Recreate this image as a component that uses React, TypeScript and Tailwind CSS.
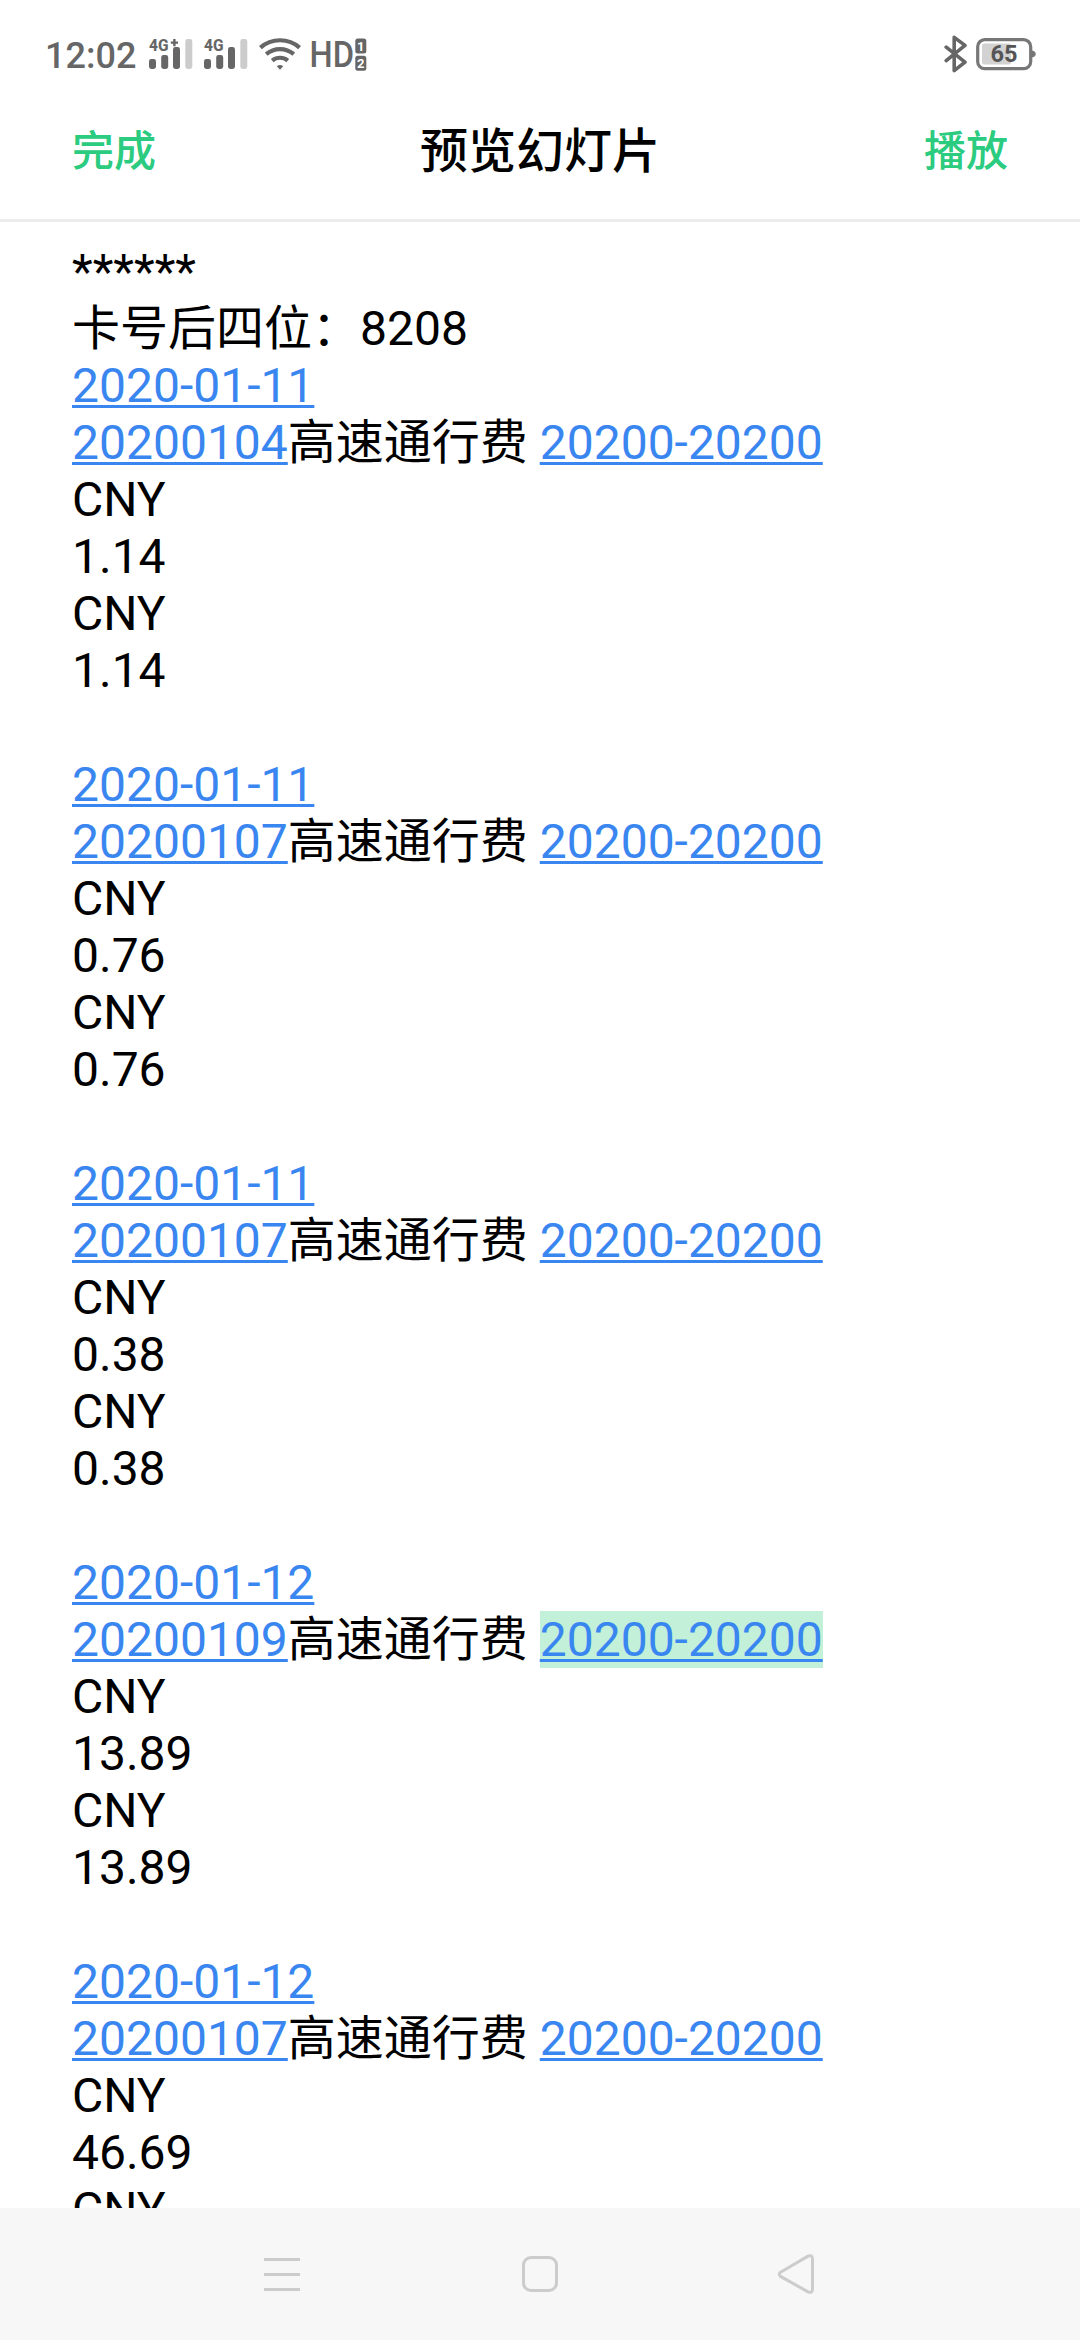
import type { ReactNode } from 'react';

interface Entry {
  date: string;
  code: string;
  amount: string;
  selected?: boolean;
}

const entries: Entry[] = [
  { date: '2020-01-11', code: '20200104', amount: '1.14' },
  { date: '2020-01-11', code: '20200107', amount: '0.76' },
  { date: '2020-01-11', code: '20200107', amount: '0.38' },
  { date: '2020-01-12', code: '20200109', amount: '13.89', selected: true },
  { date: '2020-01-12', code: '20200107', amount: '46.69' },
];

function SignalIcon({ plus }: { plus?: boolean }) {
  return (
    <svg className="w-[44px] h-[34px] overflow-visible" viewBox="0 0 44 34" fill="#666666">
      <text
        x="0"
        y="13"
        fontSize="16.5"
        fontWeight="800"
        textLength="19.5"
        lengthAdjust="spacingAndGlyphs"
      >
        4G
      </text>
      {plus && <path d="M24.200 1h2.400v2.400h2.400v2.400h-2.400v2.400h-2.400V5.800h-2.400V3.400h2.400z" />}
      <rect x="0" y="21" width="7" height="10" rx="2.4" />
      <rect x="12.2" y="17" width="7" height="14" rx="2.4" />
      <rect x="24" y="9" width="7" height="22" rx="2.4" />
      <rect x="36.3" y="1" width="7" height="30" rx="2.4" fill="#cccccc" />
    </svg>
  );
}

function WifiIcon() {
  return (
    <svg className="w-[42px] h-[34px]" viewBox="0 0 42 34" fill="none" stroke="#666666" strokeWidth="4.2">
      <path d="M1.4 9.6C12.5-.2 29.5-.2 40.6 9.6" />
      <path d="M7.2 16.2c8-6.8 19.6-6.8 27.6 0" />
      <path d="M13.2 22.6c4.6-3.8 11-3.8 15.6 0" />
      <path d="M17.8 28.2c2-1.5 4.4-1.5 6.4 0L21 31.8z" fill="#666666" stroke="none" />
    </svg>
  );
}

function HdIcon() {
  return (
    <svg className="w-[56px] h-[34px] overflow-visible" viewBox="0 0 56 34" fill="#666666">
      <text x="-1.5" y="29.2" fontSize="36" fontWeight="500" textLength="44.5" lengthAdjust="spacingAndGlyphs">
        HD
      </text>
      <rect x="44.3" y="0.6" width="11" height="15" rx="2.5" />
      <rect x="44.3" y="17.8" width="11" height="15" rx="2.5" />
      <text x="49.8" y="12.8" fontSize="13" fontWeight="700" textAnchor="middle" fill="#ffffff">
        1
      </text>
      <text x="49.8" y="30" fontSize="13" fontWeight="700" textAnchor="middle" fill="#ffffff">
        2
      </text>
    </svg>
  );
}

function BluetoothIcon() {
  return (
    <svg
      className="w-[24px] h-[38px]"
      viewBox="0 0 24 38"
      fill="none"
      stroke="#666666"
      strokeWidth="3.6"
      strokeLinejoin="round"
      strokeLinecap="round"
    >
      <path d="M2.2 12.2 21 27.2 10.2 35.6V2.4L21 10.4 2.2 25.6" />
    </svg>
  );
}

function BatteryIcon() {
  return (
    <svg className="w-[60px] h-[34px] overflow-visible" viewBox="0 0 60 34">
      <path d="M56 12.5c5 .8 5 6.2 0 7z" fill="#777777" />
      <rect x="6" y="5.5" width="29" height="21" rx="2" fill="#d2d2d2" />
      <rect x="1.7" y="1.7" width="53" height="29" rx="7" fill="none" stroke="#777777" strokeWidth="3.2" />
      <text x="28" y="24.2" fontSize="23.5" fontWeight="700" textAnchor="middle" fill="#555555">
        65
      </text>
    </svg>
  );
}

function StatusBar() {
  return (
    <div className="flex h-[108px] items-start justify-between pl-[45px] pr-[44px]">
      <div className="flex items-start pt-[34px]">
        <span className="w-[104px] text-[36px] leading-[44px] font-medium text-[#666666]">12:02</span>
        <span className="flex pt-[4px]">
          <SignalIcon plus />
        </span>
        <span className="ml-[11px] flex pt-[4px]">
          <SignalIcon />
        </span>
        <span className="ml-[11px] flex pt-[4px]">
          <WifiIcon />
        </span>
        <span className="ml-[10px] flex pt-[4px]">
          <HdIcon />
        </span>
      </div>
      <div className="flex items-start gap-[8px] pt-[35px]">
        <BluetoothIcon />
        <span className="flex pt-[3px]">
          <BatteryIcon />
        </span>
      </div>
    </div>
  );
}

function Header() {
  return (
    <header className="flex h-[114px] items-start justify-between border-b-[3px] border-[#ececec] px-[72px] font-medium">
      <button className="w-[84px] pt-[14px] text-[42px] leading-[60px] text-[#2bcb80]">完成</button>
      <h1 className="pt-[14px] text-[48px] leading-[60px] text-black">预览幻灯片</h1>
      <button className="w-[84px] pt-[14px] text-[42px] leading-[60px] text-[#2bcb80]">播放</button>
    </header>
  );
}

function NoteLink({ children, selected }: { children: ReactNode; selected?: boolean }) {
  return (
    <a
      className={`inline-block h-[57px] align-top text-[#3a86f0] underline decoration-[2.5px] underline-offset-[3px] [text-decoration-skip-ink:none] ${
        selected ? 'bg-[#c2f0d9]' : ''
      }`}
    >
      {children}
    </a>
  );
}

function EntryBlock({ entry }: { entry: Entry }) {
  return (
    <div className="pb-[57px]">
      <p>
        <NoteLink>{entry.date}</NoteLink>
      </p>
      <p>
        <NoteLink>{entry.code}</NoteLink>
        高速通行费 <NoteLink selected={entry.selected}>20200-20200</NoteLink>
      </p>
      <p>CNY</p>
      <p>{entry.amount}</p>
      <p>CNY</p>
      <p>{entry.amount}</p>
    </div>
  );
}

function NavBar() {
  return (
    <nav className="flex h-[132px] shrink-0 items-center bg-[#f7f7f7] pl-[264px]">
      <svg className="w-[36px] h-[42px]" viewBox="0 0 36 42" fill="#cccccc">
        <rect x="0" y="5" width="36" height="3" />
        <rect x="0" y="20" width="36" height="3" />
        <rect x="0" y="35" width="36" height="3" />
      </svg>
      <span className="ml-[222px] h-[36px] w-[36px] rounded-[9px] border-[3px] border-[#cccccc]" />
      <svg
        className="ml-[219px] w-[38px] h-[42px]"
        viewBox="0 0 38 42"
        fill="none"
        stroke="#cccccc"
        strokeWidth="3"
      >
        <path d="M3.5 19.2 31 3.2Q35.5 1.5 35.5 6V36Q35.5 40.5 31 38.8L3.5 23.4Q1 21.3 3.5 19.2z" />
      </svg>
    </nav>
  );
}

export default function App() {
  return (
    <div className="flex h-[2340px] w-[1080px] flex-col overflow-hidden bg-white font-[Roboto,'Noto_Sans_CJK_SC',sans-serif]">
      <StatusBar />
      <Header />
      <main className="min-h-0 flex-1 overflow-hidden px-[72px] pt-[21px] text-[48px] leading-[57px] text-black">
        <p>******</p>
        <p>卡号后四位：8208</p>
        {entries.map((entry, index) => (
          <EntryBlock key={index} entry={entry} />
        ))}
      </main>
      <NavBar />
    </div>
  );
}
